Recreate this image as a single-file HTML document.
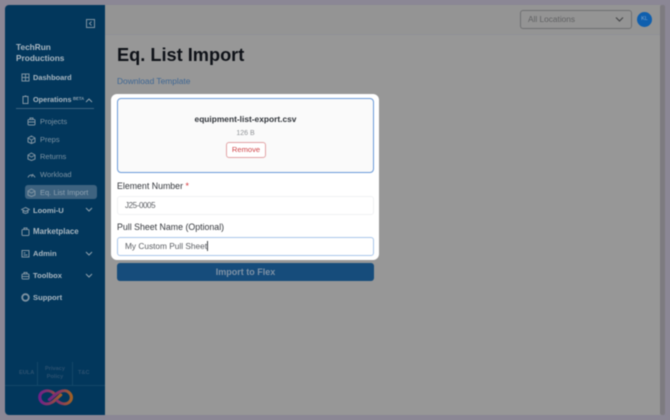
<!DOCTYPE html>
<html><head><meta charset="utf-8"><style>
*{box-sizing:border-box}
html,body{margin:0;padding:0;width:670px;height:420px;overflow:hidden;background:#8b8795}
body{position:relative;font-family:"Liberation Sans",sans-serif}
#w{position:absolute;inset:0;filter:blur(.4px)}
.a{position:absolute;white-space:nowrap}
.side{position:absolute;left:5px;top:5px;width:100px;height:410px;background:#02375c;border-radius:4px 0 0 4px}
.n{position:absolute;left:33px;font-size:7.6px;font-weight:bold;color:#aab7c1;white-space:nowrap;line-height:10px}
.s{position:absolute;left:40px;font-size:7.5px;color:#7d93a3;white-space:nowrap;line-height:10px}
svg.i{position:absolute;width:9px;height:9px;fill:none;stroke:#7f93a2;stroke-width:1}
svg.c{position:absolute;left:85px;width:8px;height:6px;fill:none;stroke:#8fa0ad;stroke-width:1}
</style></head><body><div id="w">
<div class="a" style="left:105px;top:5px;width:557px;height:410px;background:#979797"></div>
<div class="a" style="left:105px;top:5px;width:557px;height:30px;background:#949494;border-bottom:1px solid #8f9096"></div>
<div class="a" style="left:660px;top:5px;width:5px;height:410px;background:#7d7b80;border-radius:2px"></div>
<div class="side"></div>

<svg class="a" style="left:86px;top:19px" width="9" height="9" fill="none" stroke="#7f93a2" stroke-width="1"><rect x=".5" y=".5" width="8" height="8"/><path d="M5.500 2.500L3.500 4.500L5.500 6.500"/></svg>
<div class="a" style="left:16px;top:41.500px;font-size:8.300px;font-weight:bold;color:#aab7c1;line-height:11.500px">TechRun<br>Productions</div>

<svg class="i" style="left:21px;top:73px" viewBox="0 0 9 9"><rect x="1" y="1" width="7" height="7"/><path d="M1 4.500h7M4.500 1v7"/></svg>
<div class="n" style="top:73px;font-size:7.400px">Dashboard</div>
<svg class="i" style="left:21px;top:95px" viewBox="0 0 9 9"><rect x="2" y="1.500" width="5" height="7"/><path d="M3.500 1h2"/></svg>
<div class="n" style="top:95px;font-size:7.300px">Operations</div>
<div class="a" style="left:73px;top:96px;font-size:4.200px;font-weight:bold;color:#92a3b0">BETA</div>
<svg class="c" style="top:97px" viewBox="0 0 8 6"><path d="M1 5L4 2L7 5"/></svg>
<div class="a" style="left:16px;top:108px;width:78px;height:1px;background:#3d6480"></div>

<svg class="i" style="left:27px;top:117px" viewBox="0 0 9 9"><rect x="1" y="2.500" width="7" height="5.500" rx="1"/><path d="M3 2.500V1h3v1.500M1 5h7"/></svg>
<div class="s" style="top:116.500px">Projects</div>
<svg class="i" style="left:27px;top:135px" viewBox="0 0 9 9"><path d="M4.500 1L8 3v4L4.500 8.500L1 7V3zM1 3l3.500 2L8 3M4.500 5v3"/></svg>
<div class="s" style="top:134.500px">Preps</div>
<svg class="i" style="left:27px;top:152px" viewBox="0 0 9 9"><path d="M4.500 1L8 3v4L4.500 8.500L1 7V3zM1 3l3.500 2L8 3"/></svg>
<div class="s" style="top:152px">Returns</div>
<svg class="i" style="left:27px;top:170px" viewBox="0 0 9 9"><path d="M1 7.500A3.700 3.700 0 0 1 8 7.500M4.500 7L6 4"/></svg>
<div class="s" style="top:169.500px">Workload</div>
<div class="a" style="left:25px;top:185px;width:72px;height:14px;background:#3e6380;border-radius:3px"></div>
<svg class="i" style="left:27px;top:188px" viewBox="0 0 9 9"><path d="M4.500 1L8 3v4L4.500 8.500L1 7V3zM1 3l3.500 2L8 3"/></svg>
<div class="s" style="top:187.500px;color:#8fa2b1">Eq. List Import</div>

<svg class="i" style="left:21px;top:206px" viewBox="0 0 9 9"><path d="M4.500 1.500L8.500 3.500L4.500 5.500L.5 3.500zM2 4.500v2l2.500 1l2.500-1v-2"/></svg>
<div class="n" style="top:205.500px">Loomi-U</div>
<svg class="c" style="top:207px" viewBox="0 0 8 6"><path d="M1 1L4 4L7 1"/></svg>
<svg class="i" style="left:21px;top:227px" viewBox="0 0 9 9"><rect x="1" y="2.500" width="7" height="6" rx="1"/><path d="M3 2.500V1h3v1.500"/></svg>
<div class="n" style="top:227px;font-size:7.900px">Marketplace</div>
<svg class="i" style="left:21px;top:249px" viewBox="0 0 9 9"><rect x="1" y="1.500" width="7" height="6.500"/><path d="M2.500 4h2M2.500 6h4"/></svg>
<div class="n" style="top:249px">Admin</div>
<svg class="c" style="top:251px" viewBox="0 0 8 6"><path d="M1 1L4 4L7 1"/></svg>
<svg class="i" style="left:21px;top:271px" viewBox="0 0 9 9"><rect x="1" y="3" width="7" height="5" rx="1"/><path d="M3 3V1.500h3V3M1 5.500h7"/></svg>
<div class="n" style="top:271px">Toolbox</div>
<svg class="c" style="top:273px" viewBox="0 0 8 6"><path d="M1 1L4 4L7 1"/></svg>
<svg class="i" style="left:21px;top:293px" viewBox="0 0 9 9"><circle cx="4.500" cy="4.500" r="3.300" stroke-width="1.800"/></svg>
<div class="n" style="top:293px">Support</div>

<div class="a" style="left:19px;top:370px;font-size:5.600px;font-weight:bold;color:#2c5170">EULA</div>
<div class="a" style="left:37px;top:366px;width:36px;height:20px;text-align:center;font-size:5.600px;font-weight:bold;color:#2c5170;line-height:7.500px">Privacy<br>Policy</div>
<div class="a" style="left:78px;top:370px;font-size:5.600px;font-weight:bold;color:#2c5170">T&amp;C</div>
<div class="a" style="left:37px;top:362px;width:1px;height:23px;background:#134768"></div>
<div class="a" style="left:72px;top:362px;width:1px;height:23px;background:#134768"></div>
<div class="a" style="left:5px;top:385px;width:100px;height:1px;background:#134768"></div>
<svg class="a" style="left:38px;top:389px;opacity:.88" width="35" height="17" viewBox="0 0 37 20" preserveAspectRatio="none" fill="none" stroke-width="3.400" stroke-linecap="round">
<defs><linearGradient id="g" x1="0" x2="1" y1="0" y2="0"><stop offset="0" stop-color="#80208f"/><stop offset=".5" stop-color="#9a3860"/><stop offset="1" stop-color="#b5661f"/></linearGradient></defs>
<path stroke="url(#g)" d="M17 5.500C14 2 10 1.500 7 2.500C3 4 1.700 7 1.900 10C2 14 5 17.500 9.500 17.500C14 17.500 17 14 20 11L24 7"/>
<path stroke="url(#g)" d="M12 12.500L18 7C21 4 24 2 28 2C32 2 35.300 6 35.300 10C35.300 14 32 17.500 28 17.500C25 17.500 22.500 16 20.500 14"/>
</svg>

<div class="a" style="left:520px;top:9.500px;width:112px;height:19px;border:1px solid #6f7072;border-radius:3px"></div>
<div class="a" style="left:528px;top:14px;font-size:8.300px;color:#616264;line-height:10px">All Locations</div>
<svg class="a" style="left:615px;top:16px" width="9" height="7" fill="none" stroke="#47484a" stroke-width="1.200"><path d="M1 1.500L4.500 5L8 1.500"/></svg>
<div class="a" style="left:637px;top:11.500px;width:15px;height:15px;border-radius:50%;background:#0f5fae;color:#7fa6ce;font-size:5.500px;line-height:15px;text-align:center">KL</div>

<div class="a" style="left:117px;top:43px;font-size:18.200px;font-weight:bold;color:#0f1218;line-height:24px">Eq. List Import</div>
<div class="a" style="left:117px;top:76px;font-size:8.400px;color:#3f6793;line-height:11px">Download Template</div>

<div class="a" style="left:111px;top:94px;width:268px;height:165.500px;background:#fff;border-radius:6px"></div>
<div class="a" style="left:117px;top:98px;width:257px;height:75px;background:#fafafa;border:1.300px solid #6a9ad8;border-radius:4px"></div>
<div class="a" style="left:117px;top:114px;width:257px;text-align:center;font-size:8.400px;font-weight:bold;color:#30343a;line-height:11px">equipment-list-export.csv</div>
<div class="a" style="left:117px;top:129px;width:257px;text-align:center;font-size:7px;color:#8f9296;line-height:9px">126 B</div>
<div class="a" style="left:226px;top:142px;width:40px;height:16px;background:#fff;border:1px solid #e2a4a6;border-radius:3px;text-align:center;font-size:7.600px;color:#d04548;line-height:14px">Remove</div>

<div class="a" style="left:117px;top:180.500px;font-size:8.800px;color:#33363b;line-height:11px">Element Number <span style="color:#d8383c">*</span></div>
<div class="a" style="left:117px;top:195.500px;width:257px;height:19px;background:#fff;border:1px solid #f0f1f3;border-radius:3px"></div>
<div class="a" style="left:125px;top:199.500px;font-size:8px;letter-spacing:-.4px;color:#5a5d62;line-height:11px">J25-0005</div>
<div class="a" style="left:117px;top:221.500px;font-size:8.800px;color:#33363b;line-height:11px">Pull Sheet Name (Optional)</div>
<div class="a" style="left:117px;top:236.500px;width:257px;height:19px;background:#fff;border:1px solid #a9c6ea;border-radius:3px"></div>
<div class="a" style="left:125px;top:240.500px;font-size:8.300px;color:#5a5d62;line-height:11px">My Custom Pull Sheet</div>
<div class="a" style="left:207px;top:241px;width:1px;height:10px;background:#44474b"></div>

<div class="a" style="left:117px;top:263px;width:257px;height:18px;background:#164c7b;border-radius:3px;text-align:center;font-size:9px;font-weight:bold;color:#7f92a6;line-height:18px">Import to Flex</div>
</div></body></html>
